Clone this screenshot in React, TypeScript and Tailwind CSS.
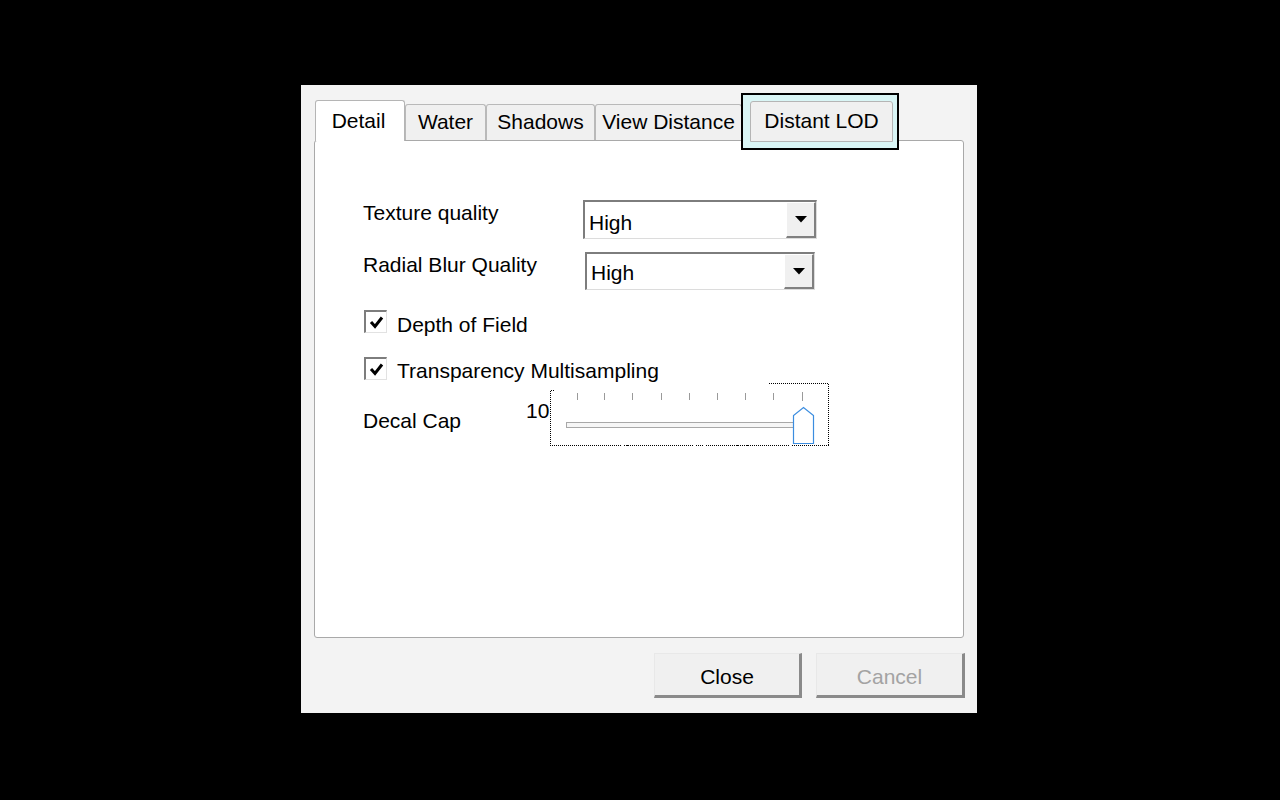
import React from "react";

const font = { fontFamily: '"Liberation Sans", Arial, sans-serif' };

function Tab({ label, w, selected }: { label: string; w: string; selected?: boolean }) {
  if (selected) {
    return (
      <div
        className={`${w} h-[41px] -mb-px relative z-10 bg-white border-t border-l border-r border-[#b5b5b5] rounded-t-[3px] flex items-center justify-center pb-[1px] pr-[3px] text-black`}
      >
        {label}
      </div>
    );
  }
  return (
    <div
      className={`${w} h-[36px] bg-[#f0f0f0] border-t border-l border-r border-[#b9b9b9] rounded-t-[3px] flex items-center justify-center pb-[1px] text-black`}
    >
      {label}
    </div>
  );
}

function Combo({ w, pt }: { w: string; pt: string }) {
  return (
    <div
      className={`${w} h-full flex bg-white border-t-2 border-l-2 border-b border-r border-t-[#7d7d7d] border-l-[#7d7d7d] border-b-[#dcdcdc] border-r-[#dcdcdc]`}
    >
      <div className={`flex-1 pl-[4px] ${pt} leading-[24px] text-black`}>High</div>
      <div className="w-[30px] h-full bg-[#f0f0f0] border-t border-l border-t-white border-l-white border-b-2 border-r-2 border-b-[#808080] border-r-[#808080] flex items-center justify-center">
        <svg width="12" height="7" viewBox="0 0 12 7">
          <polygon points="0,0 12,0 6,6.5" fill="#000" />
        </svg>
      </div>
    </div>
  );
}

function Check({ label, mt }: { label: string; mt: string }) {
  return (
    <div className="flex items-start ml-px h-[23px]">
      <div className="w-[23px] h-[23px] bg-white border-t-2 border-l-2 border-b border-r border-t-[#7d7d7d] border-l-[#7d7d7d] border-b-[#e2e2e2] border-r-[#e2e2e2] flex items-center justify-center">
        <svg width="17" height="17" viewBox="0 0 17 17">
          <polyline points="3,8 7,12.5 14,3.5" fill="none" stroke="#000" strokeWidth="3" />
        </svg>
      </div>
      <div className={`ml-[10px] ${mt} leading-[24px] text-black whitespace-nowrap`}>{label}</div>
    </div>
  );
}

function Slider() {
  const ticks = [27, 54, 82, 111, 139, 167, 195, 223];
  return (
    <svg width="280" height="64" viewBox="0 0 280 64" shapeRendering="crispEdges">
      <path
        d="M0.5 7.5 H4 M0.5 7.5 V62.5 H278.5 V0.5 H218"
        fill="none"
        stroke="#000"
        strokeWidth="1"
        strokeDasharray="1 1"
      />
      {ticks.map((x) => (
        <line key={x} x1={x + 0.5} y1="10" x2={x + 0.5} y2="17" stroke="#9a9a9a" strokeWidth="1" />
      ))}
      <line x1="252.5" y1="9" x2="252.5" y2="18" stroke="#9a9a9a" strokeWidth="1" />
      <rect x="16.5" y="39.5" width="228" height="5" fill="#f6f6f6" stroke="#a8a8a8" strokeWidth="1" />
      <polygon
        points="243.5,60.5 243.5,32.5 253.5,24.5 263.5,32.5 263.5,60.5"
        fill="#ffffff"
        stroke="#3b8de0"
        strokeWidth="1.2"
        shapeRendering="geometricPrecision"
      />
    </svg>
  );
}

export default function App() {
  return (
    <div className="w-[1280px] h-[800px] bg-black pl-[301px] pt-[85px] text-[21px]" style={font}>
      <div className="w-[676px] h-[628px] bg-[#f3f3f3] pt-[15px] px-[13px] flex flex-col">
        {/* tab row */}
        <div className="h-[40px] flex items-end pl-px">
          <Tab label="Detail" w="w-[90px]" selected />
          <Tab label="Water" w="w-[81px]" />
          <Tab label="Shadows" w="w-[109px]" />
          <Tab label="View Distance" w="w-[147px]" />
          <div className="-ml-px -mb-[10px] relative z-10 border-2 border-black bg-[#d9f5f5] pl-[7px] pr-[4px] pt-[6px] pb-[6px]">
            <div className="w-[143px] h-[41px] bg-[#f0f0f0] border border-[#b5b5b5] rounded-t-[3px] flex items-center justify-center pb-[1px] text-black">
              Distant LOD
            </div>
          </div>
        </div>

        {/* panel */}
        <div className="h-[498px] bg-white border border-[#a9a9a9] rounded-[3px] flex flex-col pl-[48px]">
          <div className="mt-[59px] h-[39px] flex items-start">
            <div className="w-[220px] mt-px leading-[24px] text-black">Texture quality</div>
            <Combo w="w-[234px]" pt="pt-[9px]" />
          </div>
          <div className="mt-[13px] h-[38px] flex items-start">
            <div className="w-[222px] mt-px leading-[24px] text-black">Radial Blur Quality</div>
            <Combo w="w-[230px]" pt="pt-[7px]" />
          </div>
          <div className="mt-[20px]">
            <Check label="Depth of Field" mt="mt-[3px]" />
          </div>
          <div className="mt-[24px]">
            <Check label="Transparency Multisampling" mt="mt-[2px]" />
          </div>
          <div className="mt-[3px] flex items-start">
            <div className="w-[163px] mt-[26px] leading-[24px] text-black">Decal Cap</div>
            <div className="w-[24px] mt-[16px] leading-[24px] text-black">10</div>
            <Slider />
          </div>
        </div>

        {/* buttons */}
        <div className="mt-[15px] flex justify-end gap-[14px] -mr-px">
          <div className="w-[148px] h-[45px] bg-[#f0f0f0] border-t border-l border-t-[#e8e8e8] border-l-[#e8e8e8] border-b-[3px] border-r-[3px] border-b-[#8a8a8a] border-r-[#8a8a8a] flex items-center justify-center pt-[4px] text-black">
            Close
          </div>
          <div className="w-[149px] h-[45px] bg-[#f0f0f0] border-t border-l border-t-[#e8e8e8] border-l-[#e8e8e8] border-b-[3px] border-r-[3px] border-b-[#8a8a8a] border-r-[#8a8a8a] flex items-center justify-center pt-[4px] text-[#a3a3a3]">
            Cancel
          </div>
        </div>
      </div>
    </div>
  );
}
